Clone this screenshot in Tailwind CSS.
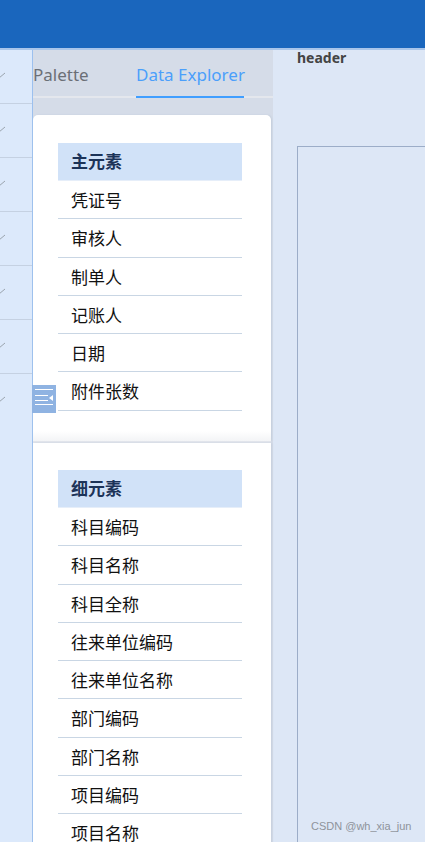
<!DOCTYPE html>
<html>
<head>
<meta charset="utf-8">
<script src="https://cdn.jsdelivr.net/npm/@tailwindcss/browser@4"></script>
</head>
<body class="m-0 overflow-hidden">
<div class="relative w-[425px] h-[842px] overflow-hidden flex flex-col bg-[#dde7f6] font-['Noto_Sans','Noto_Sans_CJK_SC',sans-serif]">
  <div class="h-[50px] shrink-0 bg-[#1a66bd] border-b-2 border-[#a9c5ea]"></div>
  <div class="flex flex-1 min-h-0">
    <div class="w-[33px] shrink-0 bg-[#dce9fb] border-r border-[#9cc0ee] flex flex-col">
      <div class="h-[54px] shrink-0 border-b border-[#c5d1e2] pt-[21px]"><svg class="-ml-px" width="8" height="8" viewBox="0 0 8 8" fill="none" stroke="#9aa3ad"><path d="M0 7L6 2"/></svg></div>
      <div class="h-[54px] shrink-0 border-b border-[#c5d1e2] pt-[21px]"><svg class="-ml-px" width="8" height="8" viewBox="0 0 8 8" fill="none" stroke="#9aa3ad"><path d="M0 7L6 2"/></svg></div>
      <div class="h-[54px] shrink-0 border-b border-[#c5d1e2] pt-[21px]"><svg class="-ml-px" width="8" height="8" viewBox="0 0 8 8" fill="none" stroke="#9aa3ad"><path d="M0 7L6 2"/></svg></div>
      <div class="h-[54px] shrink-0 border-b border-[#c5d1e2] pt-[21px]"><svg class="-ml-px" width="8" height="8" viewBox="0 0 8 8" fill="none" stroke="#9aa3ad"><path d="M0 7L6 2"/></svg></div>
      <div class="h-[54px] shrink-0 border-b border-[#c5d1e2] pt-[21px]"><svg class="-ml-px" width="8" height="8" viewBox="0 0 8 8" fill="none" stroke="#9aa3ad"><path d="M0 7L6 2"/></svg></div>
      <div class="h-[54px] shrink-0 border-b border-[#c5d1e2] pt-[21px]"><svg class="-ml-px" width="8" height="8" viewBox="0 0 8 8" fill="none" stroke="#9aa3ad"><path d="M0 7L6 2"/></svg></div>
      <div class="h-[54px] shrink-0 pt-[21px]"><svg class="-ml-px" width="8" height="8" viewBox="0 0 8 8" fill="none" stroke="#9aa3ad"><path d="M0 7L6 2"/></svg></div>
    </div>
    <div class="w-[240px] shrink-0 bg-[#d5dce8] flex flex-col">
      <div class="h-[46px] shrink-0 border-b-2 border-[#e4e7ed] flex text-[17px] leading-[50px] box-content">
        <div class="w-[103px] text-[#6b6f76] h-[46px]">Palette</div>
        <div class="w-[108px] text-center text-[#4b9ffb] h-[48px] border-b-2 border-[#409eff] whitespace-nowrap">Data Explorer</div>
      </div>
      <div class="h-[17px] shrink-0"></div>
      <div class="w-[238px] h-[326px] shrink-0 bg-white rounded-t-[5px] pt-[28px] shadow-[1px_0_2px_#c3cddc] flex flex-col">
        <div class="ml-[25px] w-[184px]">
          <div class="h-[38px] bg-[#d1e2f8] border-b border-[#e6eef9] pl-[13px] text-[17px] leading-[37px] font-bold text-[#1c3358]">主元素</div>
          <div class="h-[38.3px] border-b border-[#c9d6e4] pl-[13px] text-[17px] leading-[39px] text-[#111]">凭证号</div>
          <div class="h-[38.3px] border-b border-[#c9d6e4] pl-[13px] text-[17px] leading-[39px] text-[#111]">审核人</div>
          <div class="h-[38.3px] border-b border-[#c9d6e4] pl-[13px] text-[17px] leading-[39px] text-[#111]">制单人</div>
          <div class="h-[38.3px] border-b border-[#c9d6e4] pl-[13px] text-[17px] leading-[39px] text-[#111]">记账人</div>
          <div class="h-[38.3px] border-b border-[#c9d6e4] pl-[13px] text-[17px] leading-[39px] text-[#111]">日期</div>
          <div class="h-[38.3px] border-b border-[#c9d6e4] pl-[13px] text-[17px] leading-[39px] text-[#111]">附件张数</div>
        </div>
        <div class="mt-auto h-[10px] bg-linear-to-b from-white to-[#f3f4f6]"></div>
      </div>
      <div class="h-[2px] w-[238px] shrink-0 bg-[#e3e6ec]"></div>
      <div class="w-[238px] flex-1 bg-white pt-[27px] shadow-[1px_0_2px_#c3cddc]">
        <div class="ml-[25px] w-[184px]">
          <div class="h-[38px] bg-[#d1e2f8] border-b border-[#e6eef9] pl-[13px] text-[17px] leading-[37px] font-bold text-[#1c3358]">细元素</div>
          <div class="h-[38.3px] border-b border-[#c9d6e4] pl-[13px] text-[17px] leading-[39px] text-[#111]">科目编码</div>
          <div class="h-[38.3px] border-b border-[#c9d6e4] pl-[13px] text-[17px] leading-[39px] text-[#111]">科目名称</div>
          <div class="h-[38.3px] border-b border-[#c9d6e4] pl-[13px] text-[17px] leading-[39px] text-[#111]">科目全称</div>
          <div class="h-[38.3px] border-b border-[#c9d6e4] pl-[13px] text-[17px] leading-[39px] text-[#111]">往来单位编码</div>
          <div class="h-[38.3px] border-b border-[#c9d6e4] pl-[13px] text-[17px] leading-[39px] text-[#111]">往来单位名称</div>
          <div class="h-[38.3px] border-b border-[#c9d6e4] pl-[13px] text-[17px] leading-[39px] text-[#111]">部门编码</div>
          <div class="h-[38.3px] border-b border-[#c9d6e4] pl-[13px] text-[17px] leading-[39px] text-[#111]">部门名称</div>
          <div class="h-[38.3px] border-b border-[#c9d6e4] pl-[13px] text-[17px] leading-[39px] text-[#111]">项目编码</div>
          <div class="h-[38.3px] border-b border-[#c9d6e4] pl-[13px] text-[17px] leading-[39px] text-[#111]">项目名称</div>
        </div>
      </div>
    </div>
    <div class="flex-1 pl-[24px] flex flex-col">
      <div class="h-[96px] shrink-0 text-[14px] leading-[15px] font-bold text-[#444]">header</div>
      <div class="flex-1 border border-[#9cadc8] border-r-0 border-b-0"></div>
    </div>
  </div>
  <div class="absolute left-[32px] top-[385px] w-[24px] h-[28px] bg-[#8fb3e2]">
    <svg width="24" height="28" viewBox="0 0 24 28" fill="none" stroke="#fff"><path d="M3 4.5H21M3 10.5H16M3 15.5H16M3 19.5H21"/><path d="M21 10V16L17 13Z" fill="#fff" stroke="none"/></svg>
  </div>
  <div class="absolute left-[311px] top-[819px] text-[11px] leading-[14px] text-[#8e939b] font-['Liberation_Sans',sans-serif] whitespace-nowrap">CSDN @wh_xia_jun</div>
</div>
</body>
</html>
